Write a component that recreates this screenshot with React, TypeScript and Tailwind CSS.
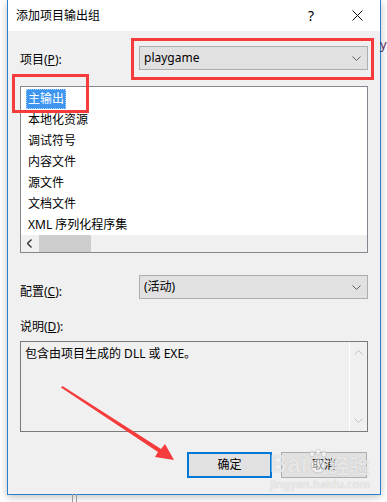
import React from "react";

const items = ["主输出", "本地化资源", "调试符号", "内容文件", "源文件", "文档文件", "XML 序列化程序集"];

const Chevron = ({ up = false, color = "#606060" }: { up?: boolean; color?: string }) => (
  <svg width={9} height={5} viewBox="0 0 9 5" fill="none">
    <polyline
      points={up ? "0.5,4.5 4.5,0.5 8.5,4.5" : "0.5,0.5 4.5,4.5 8.5,0.5"}
      stroke={color}
      strokeWidth={1}
    />
  </svg>
);

const Combo = ({ text }: { text: string }) => (
  <div className="flex-1 h-[24px] flex items-center justify-between pl-[4px] pr-[6px] bg-[#e1e1e1] border border-[#adadad]">
    <span>{text}</span>
    <Chevron />
  </div>
);

export default function App() {
  return (
    <div className="relative w-[387px] h-[502px] bg-white overflow-hidden text-[12px] text-black font-['Noto_Sans','Noto_Sans_CJK_SC',sans-serif]">
      {/* stuff behind the dialog */}
      <div className="absolute left-[72px] top-[494px] w-[1px] h-[8px] bg-[#9a9a9a]" />
      <div className="absolute left-[76px] top-[494px] w-[1px] h-[8px] bg-[#9a9a9a]" />
      <span className="absolute left-[380px] top-[35px] text-[13px] text-[#5a2a5a]">y</span>

      <div className="ml-[7px] w-[374px] h-[495px] flex flex-col bg-[#f0f0f0] border-x border-b border-[#2a7fcf] shadow-[0_2px_8px_rgba(0,0,0,0.25)]">
        {/* title bar */}
        <div className="h-[31px] flex items-center bg-white">
          <span className="pl-[8px] flex-1 text-[12px]">添加项目输出组</span>
          <div className="w-[46px] h-full flex items-center justify-center text-[14px]">?</div>
          <div className="w-[46px] h-full flex items-center justify-center">
            <svg width={11} height={11} viewBox="0 0 11 11" fill="none">
              <path d="M0.5 0.5L10.5 10.5M10.5 0.5L0.5 10.5" stroke="#111" strokeWidth={1} />
            </svg>
          </div>
        </div>

        <div className="flex flex-col px-[12px]">
          {/* project */}
          <div className="mt-[15px] flex h-[24px]">
            <span className="w-[119px] pt-[5px]">
              项目(<span className="underline">P</span>):
            </span>
            <Combo text="playgame" />
          </div>

          {/* list */}
          <div className="mt-[16px] h-[167px] flex flex-col bg-white border border-[#828790]">
            <div className="pt-[1px] flex flex-col">
              {items.map((it, i) => (
                <div key={it} className="h-[21px] flex items-center pl-[5px]">
                  {i === 0 ? (
                    <span className="h-[20px] flex items-center px-[2px] bg-[#3d95f0] text-white outline-1 outline-dotted outline-[#a9d0ff] -outline-offset-1">
                      {it}
                    </span>
                  ) : (
                    <span className="px-[2px]">{it}</span>
                  )}
                </div>
              ))}
            </div>
            <div className="h-[17px] flex bg-[#f0f0f0]">
              <div className="w-[17px] flex items-center justify-center">
                <svg width={5} height={9} viewBox="0 0 5 9" fill="none">
                  <polyline points="4.5,0.5 0.5,4.5 4.5,8.5" stroke="#333" strokeWidth={1.4} />
                </svg>
              </div>
              <div className="w-[52px] h-full ml-[1px] bg-[#cdcdcd]" />
            </div>
          </div>

          {/* config */}
          <div className="mt-[22px] flex h-[24px]">
            <span className="w-[119px] pt-[8px]">
              配置(<span className="underline">C</span>):
            </span>
            <Combo text="(活动)" />
          </div>

          {/* description */}
          <span className="mt-[20px] leading-[16px]">
            说明(<span className="underline">D</span>):
          </span>
          <div className="mt-[6px] h-[91px] flex border border-[#7a7a7a]">
            <p className="flex-1 pl-[4px] pt-[3px]">包含由项目生成的 DLL 或 EXE。</p>
            <div className="w-[18px] flex flex-col items-center justify-between py-[8px] border-l border-white">
              <Chevron up color="#c0c0c0" />
              <Chevron color="#c0c0c0" />
            </div>
          </div>

          {/* buttons */}
          <div className="mt-[20px] flex justify-end gap-[9px] pr-[1px]">
            <div className="w-[85px] h-[26px] flex items-center justify-center bg-[#e1e1e1] border-2 border-[#0078d7]">
              确定
            </div>
            <div className="w-[86px] h-[26px] flex items-center justify-center bg-[#e1e1e1] border border-[#adadad]">
              取消
            </div>
          </div>
        </div>
      </div>

      {/* annotations */}
      <div className="absolute left-[131px] top-[38px] w-[243px] h-[42px] border-[3px] border-[#f53b3b]" />
      <div className="absolute left-[12px] top-[74px] w-[77px] h-[39px] border-[3px] border-[#f53b3b]" />
      <svg className="absolute left-0 top-0" width={387} height={502} viewBox="0 0 387 502">
        <polygon
          points="61,387.5 62.5,386 161,449 165,444 174,460 155,457 158,452"
          fill="#f53b3b"
        />
      </svg>

      {/* watermark */}
      <div className="absolute left-[270px] top-[449px] flex flex-col items-start text-white/70 [text-shadow:0_0_1px_#b0b0b0] opacity-90">
        <div className="flex items-end leading-none">
          <span className="text-[24px] font-bold font-['Liberation_Sans',sans-serif]">Bai</span>
          <svg width={22} height={26} viewBox="0 0 22 26" className="mb-[1px]">
            <g fill="rgba(255,255,255,0.6)" stroke="#b0b0b0" strokeWidth={0.6}>
              <ellipse cx={5} cy={5} rx={2.5} ry={3} />
              <ellipse cx={11} cy={3} rx={2.5} ry={3} />
              <ellipse cx={17} cy={5} rx={2.5} ry={3} />
              <circle cx={11} cy={17} r={7} />
            </g>
          </svg>
          <span className="text-[20px] font-bold font-['Noto_Sans_CJK_SC',sans-serif]">经验</span>
        </div>
        <span className="mt-[2px] text-[11px] leading-none tracking-[0.3px]">jingyan.baidu.com</span>
      </div>
    </div>
  );
}
